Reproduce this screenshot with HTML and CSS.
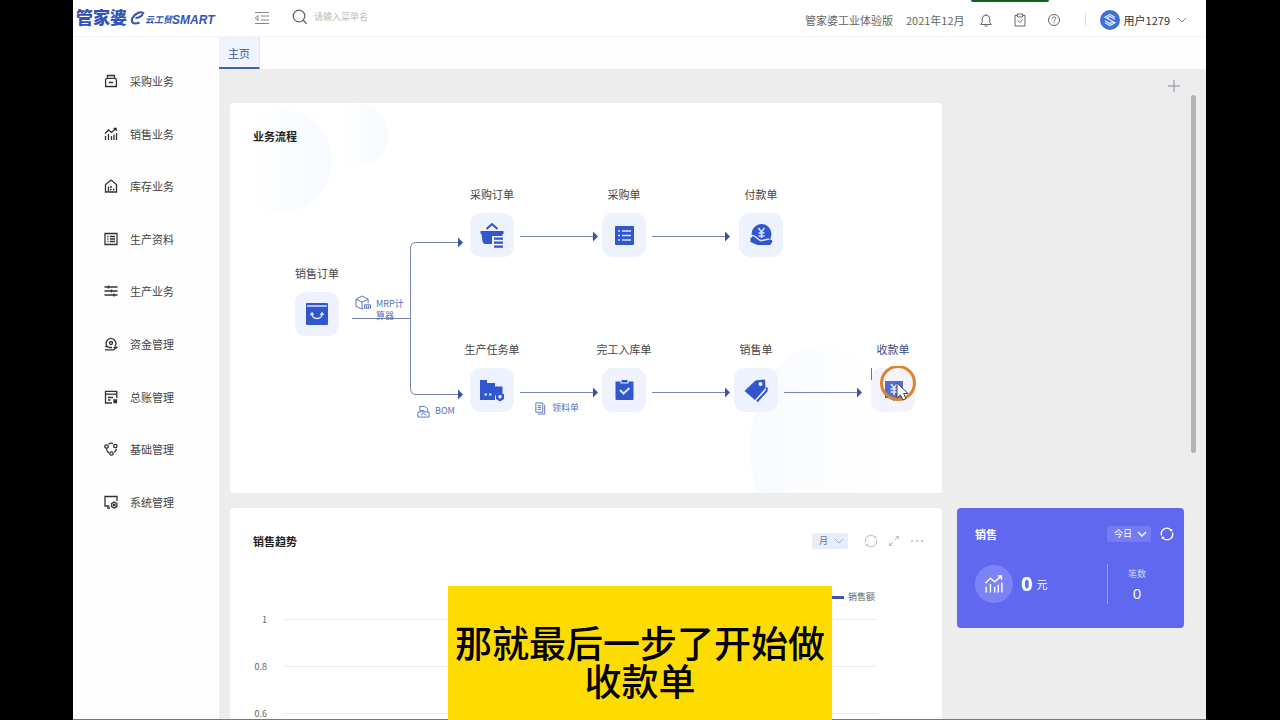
FILE: index.html
```html
<!DOCTYPE html>
<html lang="zh-CN">
<head>
<meta charset="utf-8">
<title>管家婆云工贸SMART</title>
<link rel="stylesheet" href="styles.css">
</head>
<body>
<svg class="defs" aria-hidden="true">
  <symbol id="i-trend" viewBox="0 0 14 14"><path d="M1 6.500 4.500 3l3 2.500L12 1.500M9.500 1.300h2.700V4M1.500 9v4M4.500 7v6M7.500 9v4M10 7.500V13M12.500 6v7"/></symbol>
  <symbol id="i-refresh" viewBox="0 0 14 14"><path d="M1.600 8.500A5.500 5.500 0 0 1 11 3.200M12.400 5.500A5.500 5.500 0 0 1 3 10.800"/><path d="m10 3.400 1.600.3.200-1.500M4 10.600l-1.600-.3-.2 1.500"/></symbol>
  <symbol id="i-chev" viewBox="0 0 10 6"><path d="m1 1 4 4 4-4"/></symbol>
</svg>
<div class="app">
  <header class="topbar">
    <a class="logo" href="#"><span class="logo-main">管家婆</span><svg class="logo-mark" viewBox="0 0 14 16"><path d="M13.500 3.500C11 .5 4.500 3 2 8c-2 4.500 1 7 7 4.500M5 8c4-.5 7.500-2.500 7-4.500"/></svg><span class="logo-sub">云工贸</span><span class="logo-smart">SMART</span></a>
    <button class="icon-btn fold" aria-label="折叠菜单"><svg viewBox="0 0 16 14"><path d="M1 1.500h14M7 5h8M7 9h8M1 12.500h14M4 4.500 1.200 7 4 9.500z"/></svg></button>
    <label class="search"><svg viewBox="0 0 16 16"><circle cx="7" cy="7" r="5.800"/><path d="m11.300 11.300 3.400 3.400"/></svg><input type="text" aria-label="搜索菜单" placeholder="请输入菜单名"></label>
    <div class="account">
      <span class="edition">管家婆工业体验版</span>
      <span class="period">2021年12月</span>
      <button class="icon-btn" aria-label="通知"><svg viewBox="0 0 14 14"><path d="M7 1v1M3.200 9.500V6a3.800 3.800 0 0 1 7.600 0v3.500l1.500 2H1.700zM5.500 13h3"/></svg></button>
      <button class="icon-btn" aria-label="待办"><svg viewBox="0 0 14 14"><path d="M4.500 2.500H2v10.500h10V2.500H9.500M4.500 1h5v3h-5zM4.700 7.500l2 2L10 6.500"/></svg></button>
      <button class="icon-btn" aria-label="帮助"><svg viewBox="0 0 14 14"><circle cx="7" cy="7" r="5.500"/><path d="M5.200 5.600c.2-2.400 3.700-2 3.600 0C8.700 6.900 7 6.900 7 8.300M7 9.300v1"/></svg></button>
      <i class="divider"></i>
      <button class="user"><svg class="avatar" viewBox="0 0 20 20"><circle cx="10" cy="10" r="10"/><path d="M15 7.300 10 4.500 5 7.300l8 4.500-3 1.700-5-2.800M5 12.700l5 2.800 5-2.800-8-4.500 3-1.700 5 2.800"/></svg><span>用户1279</span><svg class="chev"><use href="#i-chev"/></svg></button>
    </div>
  </header>
  <div class="body">
    <nav class="side">
      <a href="#"><svg viewBox="0 0 14 14"><path d="M3.500 3.500V1.500h7v2M2.500 4.300h9l.9 1.700v6.500H1.600V6zM4.800 8.500h4.400"/></svg>采购业务</a>
      <a href="#"><svg><use href="#i-trend"/></svg>销售业务</a>
      <a href="#"><svg viewBox="0 0 14 14"><path d="M4 13H1.500V5.500L7 1l5.500 4.500V13H11M4.500 7.500v5.800M4.500 13H11"/><path d="M6 8h2M6 10.500h1.500M9 10.500h1.500"/></svg>库存业务</a>
      <a href="#"><svg viewBox="0 0 14 14"><path d="M1 1.500h12v11H1zM3.300 4.500h1.200M6 4.500h5M3.300 7h1.200M6 7h5M3.300 9.500h1.200M6 9.500h5"/></svg>生产资料</a>
      <a href="#"><svg viewBox="0 0 14 14"><path d="M.5 3h13M.5 7h13M.5 11h13M4.500 1.500v3M7.500 5.500v3M10 9.500v3"/></svg>生产业务</a>
      <a href="#"><svg viewBox="0 0 14 14"><path d="M3 9A4.800 4.800 0 1 1 11 9"/><circle cx="7" cy="6" r="1.500"/><path d="M1 9.500c2-.8 3 1 5 1h2M1 12.800h8.500l3.500-2.600c-1-.8-2 .1-3.500.5"/></svg>资金管理</a>
      <a href="#"><svg viewBox="0 0 14 14"><path d="M8 13H1.500V1.300h11.300V8M1.500 4.200h11.300M4 7.500h5M4 10h2.500"/><path d="M10 10h2.500v2.500H10z" fill="currentColor"/></svg>总账管理</a>
      <a href="#"><svg viewBox="0 0 14 14"><circle cx="2.500" cy="4.500" r="1.700"/><circle cx="11.300" cy="4" r="1.700"/><circle cx="7.500" cy="11.500" r="1.700"/><path d="M4.500 2.200C6 1 8 1 9 1.700M12.300 6.800c-.2 1.500-1 2.700-2 3.500M2.500 7c.3 2 1.300 3.200 2.700 4"/></svg>基础管理</a>
      <a href="#"><svg viewBox="0 0 14 14"><path d="M5.500 11H1V1.500h12V6M3 13h3"/><path d="m10.300 7 2.600 1.500v3L10.300 13l-2.600-1.500v-3z"/><circle cx="10.300" cy="10" r=".8"/></svg>系统管理</a>
    </nav>
    <div class="content">
      <div class="tabs"><a class="tab" href="#">主页</a></div>
      <main class="main">
        <div class="toolbar"><button class="icon-btn" aria-label="添加"><svg viewBox="0 0 14 14"><path d="M7 1v12M1 7h12"/></svg></button></div>
        <div class="grid">
          <section class="card flow">
            <h2>业务流程</h2>
            <svg class="lines" viewBox="0 0 712 390">
              <defs>
                <linearGradient id="g1"><stop offset=".2" stop-color="#f7fafe" stop-opacity="0"/><stop offset="1" stop-color="#f6fafe"/></linearGradient>
                <linearGradient id="g2"><stop offset="0" stop-color="#f7fafe"/><stop offset="1" stop-color="#fafcfe" stop-opacity="0"/></linearGradient>
              </defs>
              <circle cx="50" cy="58" r="52" fill="url(#g1)"/>
              <circle cx="126" cy="32" r="32" fill="url(#g1)"/>
              <ellipse cx="592" cy="345" rx="72" ry="103" fill="url(#g2)"/>
              <path class="wire" d="M122 215.500h58M232 139.500h-46q-5.500 0-5.500 6v140q0 6 5.500 6h46M290 133.500h76M422 133.500h76M290 289.500h76M422 289.500h76M554 289.500h76"/>
              <path class="heads" d="m228 134.500 5 5-5 5zM228 286.500l5 5-5 5zM363 128.500l5 5-5 5zM495 128.500l5 5-5 5zM363 284.500l5 5-5 5zM495 284.500l5 5-5 5zM627 284.500l5 5-5 5z"/>
            </svg>
            <button class="node n-so"><span>销售订单</span><i><svg viewBox="0 0 24 24"><path class="f" d="M1 2q0-1 1-1h20q1 0 1 1v20q0 1-1 1H2q-1 0-1-1z"/><path class="w" d="M2 4h20M7 12c0 6 10 6 10 0"/><path class="w" d="m5.500 13 1.500-2L8.500 13M15.500 13l1.500-2 1.500 2"/></svg></i></button>
            <button class="node n-po"><span>采购订单</span><i><svg viewBox="0 0 24 24"><path class="s" d="m6.500 6 5.500-5 5.500 5"/><path class="f" d="M.5 8h23v3h-1v2H12v8H5.500Q3 21 2.500 18L1.500 11h-1zM14 14.500h9v2.300h-9zM14 18.500h9v2.300h-9zM14 22.500h9v2.300h-9z"/></svg></i></button>
            <button class="node n-pu"><span>采购单</span><i><svg viewBox="0 0 24 24"><path class="f" d="M3 4q0-1 1-1h17q1 0 1 1v17q0 1-1 1H4q-1 0-1-1z"/><path class="w" d="M6 8h2M10 8h9M6 12.500h2M10 12.500h9M6 17h2M10 17h9"/></svg></i></button>
            <button class="node n-pay"><span>付款单</span><i><svg viewBox="0 0 24 24"><circle class="f" cx="12.500" cy="11" r="10"/><path class="w" d="m9.500 5 3 4 3-4M12.500 9v6M9.500 10h6M9.500 13h6M1 12.500c5-2 6 3.500 11 5.200l8-1.700"/><path class="f" d="M1.500 14.500c4 0 6 3.500 9 4.500h5l6-2.500q2.500 0 1.500 3l-2 2.500H8.500L1.500 19z"/></svg></i></button>
            <button class="node n-mo"><span>生产任务单</span><i><svg viewBox="0 0 24 24"><path class="f" d="M0 2h7v3h8v3.500h7.500v6.500H18l-3 3v4H0z"/><path class="w wide" d="M4.500 16.500H7M9 16.500h2.500"/><path class="f" d="m20 14 4 2.300v4.600L20 23.500l-4-2.600v-4.600z"/><circle class="hole" cx="20" cy="18.700" r="1.800"/></svg></i></button>
            <button class="node n-in"><span>完工入库单</span><i><svg viewBox="0 0 24 24"><path class="f" d="M3.500 3.500h5v2h8v-2h5V21q0 1-1 1h-16q-1 0-1-1zM9.500 2h6v2.500h-6z"/><path class="w wide" d="m8 12 3.500 3.500L17.500 10"/></svg></i></button>
            <button class="node n-sa"><span>销售单</span><i><svg viewBox="0 0 24 24"><path class="f" d="M.5 13 11.500 2.500l9.500-1 .5 8.500L11 22z"/><circle class="hole" cx="16.500" cy="6" r="2"/><path class="s" d="m23 9.500-.5 3.500-9.500 10.500"/></svg></i></button>
            <button class="node n-re"><span>收款单</span><i><svg viewBox="0 0 24 24"><path class="f" d="M4 3h18v17h-6l-3 3-3-3H4z"/><path class="w" d="m10 6 3 4 3-4M13 10v7M9.500 11h7M9.500 14h7"/></svg></i></button>
            <a class="tag t-mrp" href="#"><svg viewBox="0 0 17 16"><path d="M9 14.500 7.500 15 1 12V4.500L7.500 1 14 4.500V9M1 4.500l6.500 3 6.500-3M7.500 7.500V15M10 10.500h6.500V14H10zM12 11v3M14.200 11v3"/></svg><span>MRP计算器</span></a>
            <a class="tag t-bom" href="#"><svg viewBox="0 0 14 14"><path d="M3 6V1.500h5L11.500 4v3M1 7.500h12V13H1zM3 6h5M4 11l3-2 3 2"/></svg><span>BOM</span></a>
            <a class="tag t-pick" href="#"><svg viewBox="0 0 14 14"><path d="M2 1h7.500v10H2zM11.500 3v10H4M4 4h3.500M4 6h3.500M4 8h3.500"/></svg><span>领料单</span></a>
            <svg class="pointer" viewBox="0 0 50 40"><path d="M1.500 2v12" stroke="#777"/><circle cx="28" cy="17" r="16.500" fill="#fff" fill-opacity=".15" stroke="#dd8430" stroke-width="3"/><path d="M27 17v15l3.500-3 2.500 5 3-1.500-2.500-5H38z" fill="#fff" stroke="#444"/></svg>
          </section>
          <section class="card trend">
            <div class="card-head">
              <h2>销售趋势</h2>
              <div class="pick month"><select aria-label="周期"><option>月</option></select><svg class="chev"><use href="#i-chev"/></svg></div>
              <button class="icon-btn" aria-label="刷新"><svg><use href="#i-refresh"/></svg></button>
              <button class="icon-btn" aria-label="展开"><svg viewBox="0 0 14 14"><path d="m8 6 3.500-3.500M9 2.500h2.500V5M6 8l-3.500 3.500M2.500 9v2.500H5"/></svg></button>
              <button class="icon-btn" aria-label="更多"><svg class="dots" viewBox="0 0 14 14"><path d="M1 7h2M6 7h2M11 7h2"/></svg></button>
            </div>
            <div class="chart">
              <div class="legend"><i></i>销售额</div>
              <div class="tick"><span>1</span></div>
              <div class="tick"><span>0.8</span></div>
              <div class="tick"><span>0.6</span></div>
            </div>
          </section>
          <section class="sales">
            <div class="sales-head">
              <h2>销售</h2>
              <div class="pick today"><select aria-label="日期"><option>今日</option></select><svg class="chev"><use href="#i-chev"/></svg></div>
              <button class="icon-btn" aria-label="刷新"><svg><use href="#i-refresh"/></svg></button>
            </div>
            <div class="sales-body">
              <div class="badge"><svg><use href="#i-trend"/></svg></div>
              <div class="amount"><b>0</b>元</div>
              <div class="count"><span>笔数</span><b>0</b></div>
            </div>
          </section>
        </div>
        <i class="scroll"></i>
      </main>
    </div>
  </div>
  <i class="recorder"></i>
</div>
<div class="caption">那就最后一步了开始做收款单</div>
</body>
</html>
```
FILE: styles.css
```css
* { box-sizing: border-box; }
body { margin: 0; background: #000; font: 11px/16px "Noto Sans CJK SC", "Open Sans", sans-serif; color: #444; }
button, select, input { font: inherit; color: inherit; background: none; border: 0; padding: 0; margin: 0; }
a { color: inherit; text-decoration: none; }
h2 { margin: 0; font-size: 11px; line-height: 16px; font-weight: 700; color: #222; }
svg { display: block; fill: none; stroke: currentColor; }
.defs { position: absolute; width: 0; height: 0; }
.app { position: relative; margin: 0 74px 0 73px; height: 100vh; display: flex; flex-direction: column; background: #fefefe; border-bottom: 1px solid #777; overflow: hidden; }
.icon-btn svg { width: 14px; height: 14px; }
.chev { width: 10px; height: 6px; }

.topbar { display: flex; align-items: center; height: 37px; flex: none; padding: 0 19px 0 3px; border-bottom: 1px solid #f4f4f6; background: #fff; }
.logo { display: flex; align-items: center; width: 178px; color: #3453b4; white-space: nowrap; }
.logo-main { font-size: 17px; line-height: 20px; font-weight: 900; margin-top: -2px; }
.logo-mark { width: 15px; height: 16px; margin-left: 3px; stroke-width: 2; }
.logo-sub { font-size: 9px; font-style: italic; font-weight: 700; margin-top: 4px; }
.logo-smart { font: italic 700 12px/16px "Liberation Sans", sans-serif; margin-top: 3px; }
.fold { color: #888; }
.fold svg { width: 16px; }
.search { display: flex; align-items: center; gap: 6px; margin: -3px 0 0 22px; color: #666; }
.search svg { width: 16px; height: 16px; stroke-width: 1.3; }
.search input { width: 120px; font-size: 9px; }
.search input::placeholder { color: #bbb; }
.account { margin: 3px 0 0 auto; display: flex; align-items: center; color: #666; white-space: nowrap; }
.edition { margin-right: 13px; }
.period { margin-right: 14px; }
.account > .icon-btn { margin-right: 20px; }
.divider { width: 1px; height: 13px; background: #ddd; margin: 0 14px 0 4px; }
.user { display: flex; align-items: center; gap: 4px; color: #333; }
.avatar { width: 20px; height: 20px; stroke: #e3ebff; stroke-width: 1.2; }
.avatar circle { fill: #3f6fdf; stroke: none; }
.user .chev { margin-left: 3px; color: #777; }

.body { display: flex; flex: 1; min-height: 0; }
.side { width: 146px; flex: none; display: grid; grid-auto-rows: 1fr; min-height: 473px; align-self: flex-start; margin-top: 18px; }
.side a { display: flex; align-items: center; gap: 12px; padding-left: 31px; color: #444; }
.side svg { width: 14px; height: 14px; color: #333; stroke-width: 1.3; }

.content { flex: 1; min-width: 0; display: flex; flex-direction: column; }
.tabs { height: 32px; flex: none; display: flex; }
.tab { padding: 8px 9px 6px; background: #eff3fe; border-bottom: 2px solid #4661a8; border-right: 1px solid #e3e6f0; color: #42538c; }
.main { position: relative; flex: 1; min-height: 0; background: #ededed; padding: 0 22px 0 11px; overflow: hidden; }
.toolbar { height: 34px; display: flex; justify-content: flex-end; padding: 8px 3px; color: #8589a3; }
.grid { display: grid; grid-template-columns: 712fr 227fr; gap: 15px; align-items: start; }
.scroll { position: absolute; right: 10px; top: 26px; width: 5px; height: 358px; border-radius: 3px; background: #b1b3b8; }
.card { background: #fff; border-radius: 4px; }

.flow { position: relative; grid-column: 1; min-height: 390px; overflow: hidden; }
.flow h2 { position: relative; z-index: 1; padding: 25px 23px 0; }
.lines { position: absolute; left: 0; top: 0; width: 712px; height: 390px; stroke: none; }
.wire { stroke: #7685b8; }
.heads { fill: #3c54a8; }
.node { position: absolute; width: 60px; display: flex; flex-direction: column; align-items: center; gap: 11px; white-space: nowrap; color: #444; }
.node i { display: grid; place-items: center; width: 44px; height: 44px; border-radius: 11px; background: #edf2fe; }
.node svg { width: 24px; height: 24px; stroke: none; overflow: visible; }
.f { fill: #3156cd; }
.node .s { stroke: #3156cd; stroke-width: 2; }
.node .w { stroke: #dbe5ff; stroke-width: 1.5; }
.node .wide { stroke-width: 2; }
.hole { fill: #edf2fe; }
.n-so { left: 57px; top: 162px; }
.n-po { left: 232px; top: 83px; }
.n-pu { left: 364px; top: 83px; }
.n-pay { left: 501px; top: 83px; }
.n-mo { left: 232px; top: 238px; }
.n-in { left: 364px; top: 238px; }
.n-sa { left: 496px; top: 238px; }
.n-re { left: 633px; top: 238px; color: #3b4c88; }
.n-re i { background: #f4f3fd; }
.tag { position: absolute; display: flex; gap: 5px; font-size: 9px; line-height: 12px; color: #5470bd; }
.tag svg { width: 13px; height: 13px; }
.t-mrp { left: 125px; top: 195px; width: 52px; }
.t-mrp svg { width: 16px; height: 15px; flex: none; margin-top: -3px; }
.t-bom { left: 187px; top: 302px; }
.t-pick { left: 304px; top: 299px; }
.pointer { position: absolute; left: 640px; top: 263px; width: 50px; height: 40px; }

.trend { grid-column: 1; min-height: 330px; padding: 25px 18px 0 23px; }
.card-head { display: flex; align-items: center; color: #bbb; }
.card-head h2 { margin-right: auto; }
.card-head .icon-btn { margin-left: 9px; }
.card-head .pick + .icon-btn { margin-left: 16px; }
.dots { stroke-width: 1.5; }
.pick { position: relative; border-radius: 2px; height: 16px; }
.pick select { appearance: none; width: 100%; height: 16px; font-size: 9px; line-height: 16px; padding-left: 7px; display: block; }
.pick .chev { position: absolute; right: 4px; top: 5px; pointer-events: none; }
.month { width: 36px; background: #e8edfc; color: #65759f; }
.month .chev { color: #a2abc8; }
.chart { padding-right: 47px; color: #666; font-size: 9px; }
.legend { display: flex; align-items: center; justify-content: flex-end; gap: 4px; margin: 40px 2px 0 0; }
.legend i { width: 18px; height: 3px; background: #3c55a6; }
.tick { display: flex; align-items: center; height: 47px; }
.legend + .tick { margin-top: -9px; }
.tick span { width: 14px; text-align: right; }
.tick::after { content: ""; flex: 1; height: 1px; margin-left: 17px; background: #eee; }

.sales { grid-column: 2; min-height: 120px; border-radius: 4px; background: #6168f0; color: #fff; padding: 18px 10px 0 18px; }
.sales-head { display: flex; align-items: center; }
.sales h2 { color: #fff; margin-right: auto; }
.today { width: 44px; background: #757bf3; }
.today .chev, .sales-head .icon-btn svg { stroke-width: 1.3; }
.sales-head .icon-btn { margin-left: 9px; }
.sales-body { display: flex; align-items: center; padding-right: 28px; margin-top: 22px; }
.badge { width: 38px; height: 38px; border-radius: 50%; background: #7c83f5; display: grid; place-items: center; }
.badge svg { width: 20px; height: 20px; }
.amount { display: flex; align-items: center; gap: 4px; margin-left: 8px; }
.amount b { font: 700 20px/24px "Open Sans", sans-serif; }
.count { margin-left: auto; height: 40px; border-left: 1px solid #989df7; padding-left: 20px; display: flex; flex-direction: column; align-items: center; font-size: 9px; }
.count span { color: #cfd2ff; line-height: 20px; }
.count b { font: 400 15px/18px "Open Sans", sans-serif; }

.recorder { position: absolute; left: 898px; top: 0; width: 78px; height: 2px; background: #155c1d; border-radius: 0 0 2px 2px; }
.caption { position: absolute; left: 35%; right: 35%; top: 586px; bottom: 0; padding: 37px 7px 0; background: #ffdc00; color: #000; font-size: 37px; line-height: 38px; font-weight: 500; text-align: center; }
```
